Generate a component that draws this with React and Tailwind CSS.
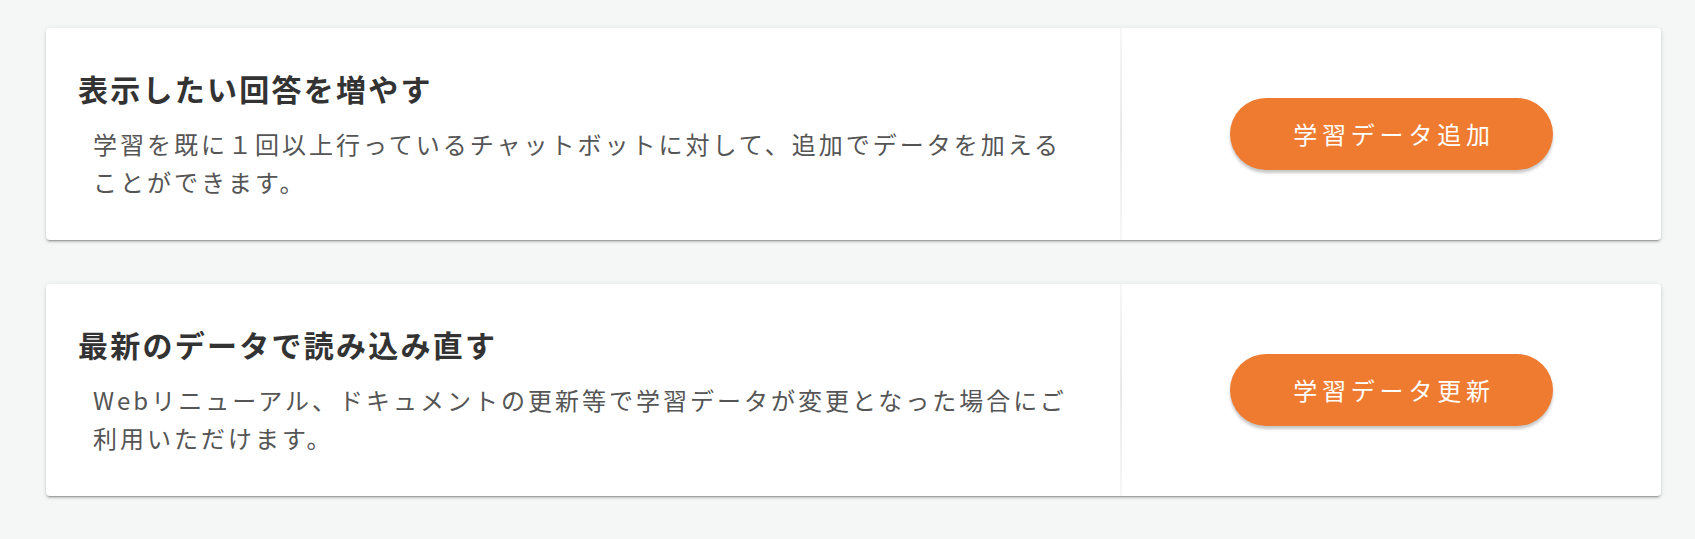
const items = [
  {
    title: '表示したい回答を増やす',
    lines: ['学習を既に１回以上行っているチャットボットに対して、追加でデータを加える', 'ことができます。'],
    button: '学習データ追加',
  },
  {
    title: '最新のデータで読み込み直す',
    lines: ['Webリニューアル、ドキュメントの更新等で学習データが変更となった場合にご', '利用いただけます。'],
    button: '学習データ更新',
  },
]

function ActionCard({ item }) {
  return (
    <section className="flex h-[212px] rounded bg-white shadow-[0_2px_2px_0_rgba(0,0,0,0.14),0_3px_1px_-2px_rgba(0,0,0,0.2),0_1px_5px_0_rgba(0,0,0,0.12)]">
      {/* 説明 */}
      <div className="flex flex-1 flex-col justify-center pl-8 pr-6">
        <h2 className="text-[30px] leading-[40px] font-bold tracking-[0.075em] text-[#333333]">{item.title}</h2>
        <p className="mt-[17px] pl-[15px] text-[24px] leading-[38px] tracking-[0.125em] text-[#555555] whitespace-nowrap">
          {item.lines[0]}
          <br />
          {item.lines[1]}
        </p>
      </div>

      <div className="w-[2px] bg-gradient-to-b from-[#f7f7f7] via-[#e9e9e9] to-[#f7f7f7]" />

      {/* ボタン */}
      <div className="flex w-[539px] items-center justify-center">
        <button className="h-[72px] w-[323px] rounded-full bg-[#ef7b31] pl-[5px] text-[24px] tracking-[0.2em] text-white shadow-[0_3px_3px_rgba(0,0,0,0.22)]">
          {item.button}
        </button>
      </div>
    </section>
  )
}

export default function App() {
  return (
    <div className="min-h-[539px] bg-[#f5f7f7] pl-[46px] pr-[34px] pt-[28px] pb-10 font-['Noto_Sans_CJK_JP','Noto_Sans',sans-serif]">
      <div className="flex flex-col gap-[44px]">
        {items.map((item, i) => (
          <ActionCard key={i} item={item} />
        ))}
      </div>
    </div>
  )
}
